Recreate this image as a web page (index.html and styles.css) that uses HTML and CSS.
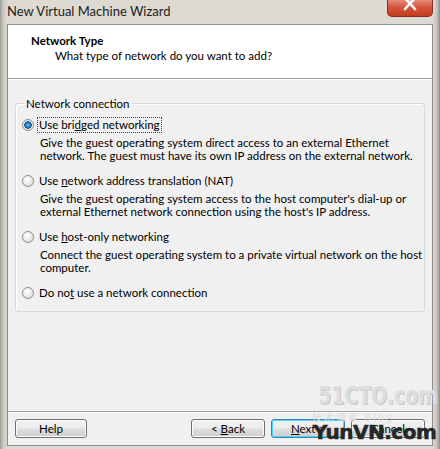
FILE: index.html
```html
<!DOCTYPE html>
<html lang="en">

<head>
  <meta charset="UTF-8">
  <title>New Virtual Machine Wizard</title>
  <link rel="stylesheet" href="styles.css">
</head>

<body>

  <div class="window">
    <div class="titlebar">
      <span class="title">New Virtual Machine Wizard</span>
      <span class="close">
        <svg width="14" height="12" viewBox="0 0 14 12">
          <path d="M2 -2 L12 9 M12 -2 L2 9" stroke="#fff" stroke-width="2.6" stroke-linecap="round"/>
        </svg>
      </span>
    </div>

    <div class="client">
      <div class="header">
        <div class="heading">Network Type</div>
        <div class="subheading">What type of network do you want to add?</div>
      </div>

      <div class="content">
        <fieldset class="group">
          <legend>Network connection</legend>

          <div class="option">
            <div class="choice"><span class="radio checked"></span><span class="label focus">Use bri<u>d</u>ged networking</span></div>
            <p class="desc">Give the guest operating system direct access to an external Ethernet<br>network. The guest must have its own IP address on the external network.</p>
          </div>

          <div class="option">
            <div class="choice"><span class="radio"></span><span class="label">Use <u>n</u>etwork address translation (NAT)</span></div>
            <p class="desc">Give the guest operating system access to the host computer's dial-up or<br>external Ethernet network connection using the host's IP address.</p>
          </div>

          <div class="option">
            <div class="choice"><span class="radio"></span><span class="label">Use <u>h</u>ost-only networking</span></div>
            <p class="desc">Connect the guest operating system to a private virtual network on the host<br>computer.</p>
          </div>

          <div class="option">
            <div class="choice"><span class="radio"></span><span class="label">Do no<u>t</u> use a network connection</span></div>
          </div>
        </fieldset>
      </div>

      <div class="footer">
        <button class="btn">Help</button>
        <div class="nav">
          <button class="btn">&lt; <u>B</u>ack</button>
          <button class="btn default"><u>N</u>ext &gt;</button>
          <button class="btn">Cancel</button>
        </div>
      </div>
    </div>

    <!-- watermarks from the original screenshot -->
    <div class="mark-cto">51CTO.com</div>
    <div class="mark-blog">技术博客 Blog</div>
    <div class="mark-yun">YunVN.com</div>
  </div>

</body>

</html>
```

FILE: styles.css
```css
body {
  margin: 0;
  font-family: Lato, "Noto Sans", sans-serif;
  font-size: 11.5px;
  color: #000;
}

.window {
  position: relative;
  width: 440px;
  height: 449px;
  overflow: hidden;
  box-sizing: border-box;
  background: linear-gradient(to right, #9c9c98 0, #c9c7c0 3px, #dcdad3 7px, #dcdad3 433px, #c4c2ba 437px, #8e8c86 440px);
}

.titlebar {
  display: flex;
  justify-content: space-between;
  align-items: flex-start;
  height: 24px;
  padding-left: 7px;
  padding-right: 7px;
}

.title {
  font-size: 13px;
  line-height: 23px;
  color: #1c1c1c;
}

.close {
  display: flex;
  justify-content: center;
  width: 46px;
  height: 17px;
  box-sizing: border-box;
  border: 1px solid #8a2c1e;
  border-top: none;
  border-radius: 0 0 5px 5px;
  background: linear-gradient(to bottom, #e68b78 0, #d4553c 45%, #c23b22 100%);
}

.client {
  display: flex;
  flex-direction: column;
  height: 422px;
  margin: 0 7px;
  box-sizing: border-box;
  border: 1px solid #8c8c8c;
  background: #f0f0f0;
}

.header {
  height: 54px;
  box-sizing: border-box;
  padding: 8px 0 0 23px;
  background: #fff;
  border-bottom: 1px solid #a0a0a0;
  line-height: 15px;
}

.heading {
  font-weight: bold;
}

.subheading {
  margin-left: 24px;
}

.content {
  flex: 1;
  padding: 16px 7px 0;
  border-top: 1px solid #fff;
}

.group {
  min-width: 0;
  margin: 0;
  padding: 6px 6px 10px;
  border: 1px solid #d5d9dc;
  border-radius: 3px;
  box-shadow: inset 1px 1px 0 #fff;
}

.group legend {
  padding: 0 2px;
  margin-left: 2px;
  line-height: 15px;
}

.option {
  margin-bottom: 11px;
}

.option:last-child {
  margin-bottom: 0;
}

.choice {
  display: flex;
  align-items: center;
  height: 16px;
}

.radio {
  width: 12px;
  height: 12px;
  margin-right: 3px;
  box-sizing: border-box;
  border: 1px solid #8e8f8f;
  border-radius: 50%;
  background: radial-gradient(circle at 40% 35%, #ffffff 0, #e8e8e8 55%, #cfcfcf 100%);
}

.radio.checked {
  background: radial-gradient(circle at 50% 50%, #7fc4f0 0, #1b6fb8 2.5px, #14508c 3.5px, #f4f4f4 4px, #dcdcdc 100%);
}

.label {
  padding: 0 1px;
  line-height: 14px;
  border: 1px dotted transparent;
}

.label.focus {
  border-color: #444;
}

.desc {
  margin: 3px 0 0 18px;
  line-height: 13px;
  white-space: nowrap;
}

.footer {
  display: flex;
  justify-content: space-between;
  height: 34px;
  box-sizing: border-box;
  padding: 7px 7px 0;
  border-top: 1px solid #a0a0a0;
  box-shadow: inset 0 1px 0 #fff;
}

.nav {
  display: flex;
  gap: 6px;
}

.btn {
  width: 72px;
  height: 19px;
  padding: 0;
  font-family: inherit;
  font-size: 11.5px;
  line-height: 15px;
  color: #000;
  border: 1px solid #707070;
  border-radius: 3px;
  background: linear-gradient(to bottom, #f2f2f2 0, #ebebeb 48%, #dddddd 52%, #cfcfcf 100%);
  box-shadow: inset 0 0 0 1px #fcfcfc;
}

.nav .btn {
  width: 74px;
}

.btn.default {
  border-color: #3c7fb1;
  box-shadow: inset 0 0 0 1px #48d8fb;
}

.mark-cto {
  position: absolute;
  left: 318px;
  top: 380px;
  font-family: "DejaVu Sans Condensed", "DejaVu Sans", sans-serif;
  font-weight: bold;
  font-size: 20px;
  line-height: 24px;
  color: #dedede;
  text-shadow: 1px 1px 0 #c8c8c8;
  transform: scale(1.05, 1.25);
  transform-origin: top left;
}

.mark-blog {
  position: absolute;
  left: 312px;
  top: 409px;
  font-family: "Noto Sans CJK SC", sans-serif;
  font-size: 10px;
  letter-spacing: 2px;
  color: #dcdcdc;
}

.mark-yun {
  position: absolute;
  left: 313px;
  top: 420px;
  font-family: "DejaVu Sans", sans-serif;
  font-weight: bold;
  font-size: 20px;
  color: #262626;
  letter-spacing: -0.5px;
  -webkit-text-stroke: 0.5px #262626;
}
```
